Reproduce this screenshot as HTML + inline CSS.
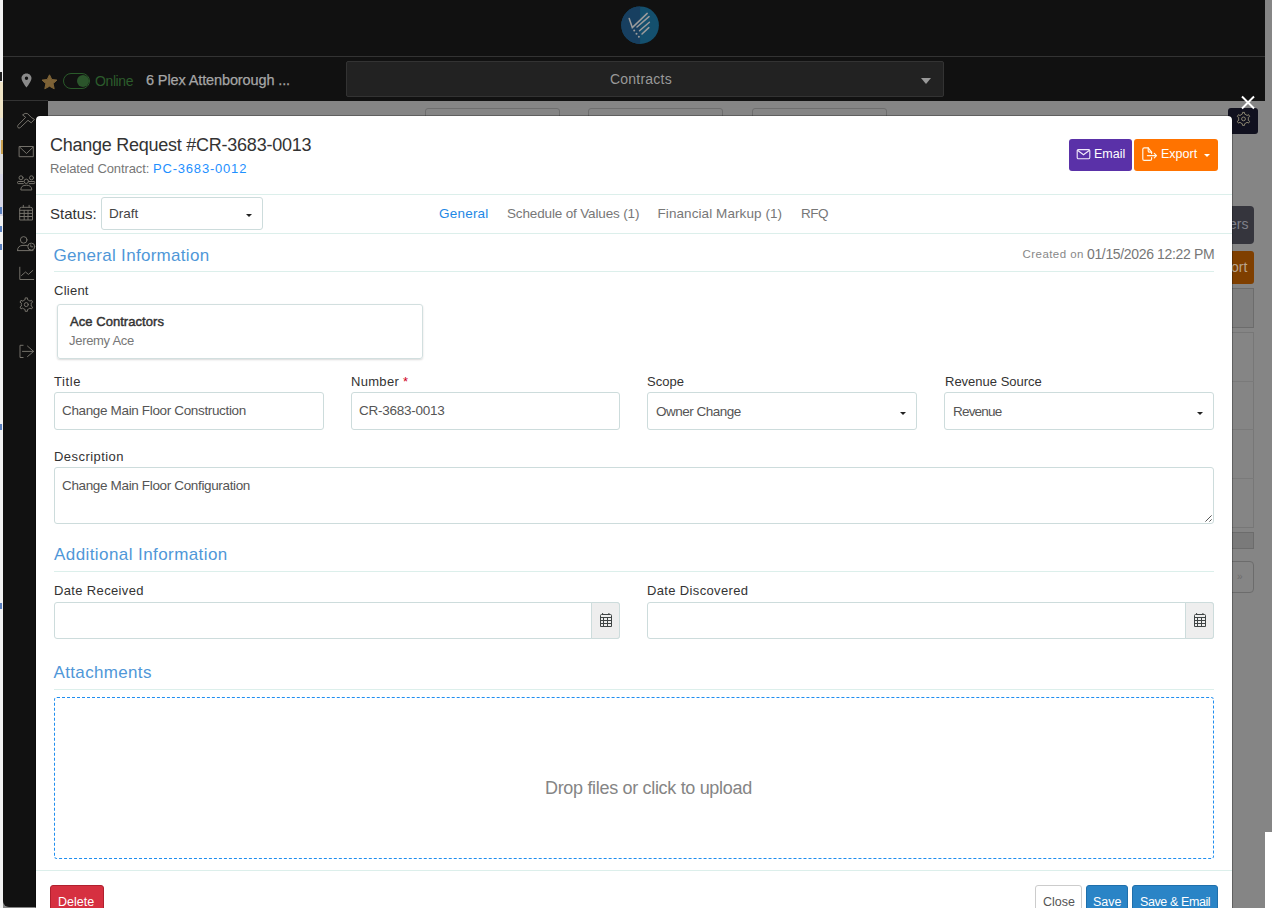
<!DOCTYPE html>
<html><head><meta charset="utf-8">
<style>
*{box-sizing:border-box;margin:0;padding:0}
html,body{width:1272px;height:908px;overflow:hidden}
body{position:relative;background:#858585;font-family:"Liberation Sans",sans-serif;color:#333}
.a{position:absolute}
.t{position:absolute;white-space:nowrap;line-height:1}
.ln{position:absolute;height:1px;background:#dcefeb}
.inp{position:absolute;border:1px solid #cddcdc;border-radius:3px;background:#fff}
.lbl{font-size:13px;color:#333}
.val{font-size:13.5px;color:#555}
.sec{font-size:17px;color:#4f97d8}
.caret{position:absolute;width:0;height:0;border-left:3px solid transparent;border-right:3px solid transparent;border-top:3px solid #222}
.btn{position:absolute;border-radius:3px}
</style></head>
<body>
<!-- left outer strip -->
<div class="a" style="left:0;top:0;width:3px;height:908px;background:#f2f2f2"></div>
<div class="a" style="left:0;top:72px;width:2px;height:9px;background:#222"></div>
<div class="a" style="left:0;top:82px;width:3px;height:36px;background:#efe4c6"></div>
<div class="a" style="left:0;top:118px;width:3px;height:56px;background:#dedede"></div>
<div class="a" style="left:1px;top:140px;width:2px;height:14px;background:#c9a050"></div>
<div class="a" style="left:0;top:174px;width:3px;height:42px;background:#d6d6e6"></div>
<div class="a" style="left:0;top:207px;width:2px;height:7px;background:#5a80c0"></div>
<div class="a" style="left:0;top:226px;width:2px;height:6px;background:#5a80c0"></div>
<div class="a" style="left:0;top:244px;width:2px;height:6px;background:#5a80c0"></div>
<div class="a" style="left:0;top:424px;width:2px;height:6px;background:#5a80c0"></div>
<div class="a" style="left:0;top:603px;width:2px;height:6px;background:#5a80c0"></div>
<!-- bottom-right white -->
<div class="a" style="left:1265px;top:832px;width:7px;height:76px;background:#fff"></div>

<!-- app dark header -->
<div class="a" style="left:3px;top:0;width:1262px;height:101px;background:#111"></div>
<div class="a" style="left:3px;top:56px;width:1262px;height:1px;background:#333"></div>
<!-- sidebar -->
<div class="a" style="left:3px;top:100px;width:45px;height:807px;background:#111;border-bottom-left-radius:6px"></div>
<div class="a" style="left:3px;top:100px;width:45px;height:1px;background:#333"></div>

<!-- logo -->
<svg class="a" style="left:620px;top:5px" width="40" height="40" viewBox="0 0 40 40">
  <circle cx="20.1" cy="20.2" r="18.8" fill="#14506e"/>
  <path d="M20.1 1.4 A18.8 18.8 0 0 0 20.1 39 Z" fill="#173f60"/>
  <g stroke="#9c9c9c" stroke-width="1.5" stroke-linecap="round" fill="none">
    <path d="M9.2 13.4 L12.3 22.6 L27.2 8.4"/>
    <path d="M17 22 L29 11.6"/>
    <path d="M19.5 25.8 L29.4 17.2"/>
    <path d="M22 29 L28.8 22.6"/>
  </g>
  <g fill="#9c9c9c"><circle cx="14.2" cy="25.6" r="1"/><circle cx="16.5" cy="28.7" r="1"/><circle cx="18.9" cy="31.7" r="1"/></g>
</svg>

<!-- header row 2 -->
<svg class="a" style="left:21px;top:73px" width="11" height="15" viewBox="0 0 11 15">
  <path d="M5.5 0.5 C2.5 0.5 0.5 2.7 0.5 5.3 C0.5 8.5 5.5 14.5 5.5 14.5 C5.5 14.5 10.5 8.5 10.5 5.3 C10.5 2.7 8.5 0.5 5.5 0.5 Z M5.5 3.6 A1.7 1.7 0 1 1 5.5 7 A1.7 1.7 0 1 1 5.5 3.6 Z" fill="#8a8a8a" fill-rule="evenodd"/>
</svg>
<svg class="a" style="left:41px;top:74px" width="17" height="16" viewBox="0 0 17 16">
  <path d="M8.5 0.8 L10.8 5.5 L16 6.1 L12.1 9.6 L13.2 14.8 L8.5 12.2 L3.8 14.8 L4.9 9.6 L1 6.1 L6.2 5.5 Z" fill="#7d6236" stroke="#7d6236" stroke-width="1" stroke-linejoin="round"/>
</svg>
<div class="a" style="left:63px;top:73px;width:27px;height:16px;border:1px solid #2a5a2a;border-radius:8px"></div>
<div class="a" style="left:77px;top:75px;width:12px;height:12px;border-radius:50%;background:#2b552b"></div>
<div class="t" style="left:95px;top:74px;font-size:14px;color:#2c5c2c;letter-spacing:-0.4px">Online</div>
<div class="t" style="left:146px;top:72.6px;font-size:14.5px;font-weight:400;color:#a6a6a6;letter-spacing:-0.12px;-webkit-text-stroke:0.25px #a6a6a6">6 Plex Attenborough ...</div>

<div class="a" style="left:346px;top:61px;width:598px;height:36px;background:#222;border:1px solid #333;border-radius:2px"></div>
<div class="t" style="left:610px;top:72px;font-size:14px;color:#999;letter-spacing:0.22px">Contracts</div>
<div class="a" style="left:921px;top:78px;width:0;height:0;border-left:5px solid transparent;border-right:5px solid transparent;border-top:6px solid #999"></div>

<!-- background page bits under overlay -->
<div class="a" style="left:425px;top:108px;width:135px;height:12px;border:1px solid #6e6e6e;border-radius:3px"></div>
<div class="a" style="left:588px;top:108px;width:135px;height:12px;border:1px solid #6e6e6e;border-radius:3px"></div>
<div class="a" style="left:752px;top:108px;width:135px;height:12px;border:1px solid #6e6e6e;border-radius:3px"></div>

<!-- right side bits -->
<div class="a" style="left:1228px;top:108px;width:30px;height:26px;background:#11111f;border-radius:3px"></div>
<svg class="a" style="left:1236px;top:111px" width="16" height="16" viewBox="0 0 16 16" fill="none" stroke="#8a8470" stroke-width="1" stroke-linejoin="round">
  <path d="M5.1 3.7 L6.3 3.1 L6.5 1.4 L8.5 1.4 L8.7 3.1 L10.0 3.7 L11.0 4.5 L12.6 3.7 L13.7 5.5 L12.2 6.5 L12.4 7.9 L12.2 9.3 L13.7 10.3 L12.6 12.1 L11.0 11.3 L9.9 12.1 L8.7 12.7 L8.5 14.4 L6.5 14.4 L6.3 12.7 L5.0 12.1 L4.0 11.3 L2.4 12.1 L1.3 10.3 L2.8 9.3 L2.6 7.9 L2.8 6.5 L1.3 5.5 L2.4 3.7 L4.0 4.5 Z"/>
  <circle cx="7.5" cy="7.9" r="1.9"/>
</svg>
<svg class="a" style="left:1240px;top:95px" width="16" height="15" viewBox="0 0 16 15">
  <path d="M2 1.5 L14 13.5 M14 1.5 L2 13.5" stroke="#fff" stroke-width="2"/>
</svg>
<div class="a" style="left:1200px;top:206px;width:54px;height:38px;background:#35353d;border-radius:4px"></div>
<div class="t" style="left:1229px;top:217px;font-size:14px;color:#80808a">ers</div>
<div class="a" style="left:1200px;top:251px;width:54px;height:33px;background:#7f3f00;border-radius:3px"></div>
<div class="t" style="left:1231px;top:260px;font-size:14px;color:#b8a48e">ort</div>
<div class="a" style="left:1200px;top:288px;width:54px;height:40px;background:#7e7e7e;border:1px solid #6c6c6c"></div>
<div class="a" style="left:1200px;top:332px;width:54px;height:196px;border:1px solid #777"></div>
<div class="a" style="left:1200px;top:381px;width:54px;height:1px;background:#7a7a7a"></div>
<div class="a" style="left:1200px;top:429px;width:54px;height:1px;background:#7a7a7a"></div>
<div class="a" style="left:1200px;top:478px;width:54px;height:1px;background:#7a7a7a"></div>
<div class="a" style="left:1200px;top:532px;width:54px;height:17px;background:#7a7a7a;border:1px solid #6c6c6c"></div>
<div class="a" style="left:1200px;top:561px;width:54px;height:32px;border:1px solid #6c6c6c;border-radius:4px"></div>
<div class="t" style="left:1237px;top:572px;font-size:10px;color:#6c6c6c">»</div>

<!-- sidebar icons -->
<svg class="a" style="left:14px;top:108px" width="22" height="260" viewBox="0 0 22 260" fill="none" stroke="#74716a" stroke-width="1" stroke-linejoin="round" stroke-linecap="round">
  <path d="M8.9 6.7 L11.1 5.4 L13.7 5.7 L17.2 9.4 L20.4 11.4 L17.2 14.8 L14 12.3 L6.3 19.6 Q5 20.6 4 19.6 Q3.2 18.6 4 17.2 L11.4 9.6 Z"/>
  <rect x="5.5" y="38.5" width="13.8" height="10.2"/>
  <path d="M5.8 39.2 L12.5 45.5 L19 39.2"/>
  <circle cx="7" cy="69.8" r="2"/><circle cx="17.5" cy="69.8" r="2"/><circle cx="12.3" cy="73.3" r="2.2"/>
  <path d="M9.3 73.5 H4.2 Q3.5 73.5 3.5 74.5 Q3.5 75.6 4.2 75.6 H9.3"/>
  <path d="M15.3 73.5 H20.2 Q20.9 73.5 20.9 74.5 Q20.9 75.6 20.2 75.6 H15.3"/>
  <path d="M6.8 81.6 Q6.8 77.2 12.3 77.2 Q17.8 77.2 17.8 81.6 Z"/>
  <path d="M5.7 111.6 V101 Q5.7 99.3 7.4 99.3 H16.8 Q18.5 99.3 18.5 101 V111.6 Z"/>
  <path d="M5.7 102.3 H18.5 M5.7 105.4 H18.5 M5.7 108.5 H18.5 M10.2 102.3 V111.6 M14 102.3 V111.6 M9.3 97.3 V99.3 M15.1 97.3 V99.3"/>
  <circle cx="9.7" cy="131.9" r="3.3"/>
  <path d="M3.5 142.6 Q3.5 137.4 9 137.4 H13.5 M3.5 142.6 H19"/>
  <circle cx="17.3" cy="138.6" r="3.5"/>
  <path d="M16.8 136.8 V138.8 H18.8"/>
  <path d="M5.8 159.2 V171.5 H19.7"/>
  <path d="M7.5 167.5 L11.5 164 L14.4 166.4 L18.8 162.5"/>
  <path d="M9.8 192.3 L11.1 191.7 L11.2 189.9 L13.4 189.9 L13.5 191.7 L14.8 192.3 L15.9 193.1 L17.6 192.3 L18.6 194.2 L17.1 195.2 L17.3 196.6 L17.1 198.0 L18.6 199.0 L17.6 200.9 L15.9 200.1 L14.8 200.9 L13.5 201.5 L13.4 203.3 L11.2 203.3 L11.1 201.5 L9.8 200.9 L8.7 200.1 L7.0 200.9 L6.0 199.0 L7.5 198.0 L7.3 196.6 L7.5 195.2 L6.0 194.2 L7.0 192.3 L8.7 193.1 Z"/>
  <circle cx="12.3" cy="196.6" r="2"/>
  <path d="M9.1 237.3 H6 V249.5 H9.1 M8.5 243.4 H19.6 M13.5 238.1 L19.6 243.4 L13.5 248.6"/>
</svg>

<!-- ===== MODAL ===== -->
<div class="a" style="left:35px;top:115px;width:1198px;height:800px;background:#fff;background-clip:padding-box;border:1px solid rgba(0,0,0,.28);border-radius:5px"></div>

<div class="t" style="left:50px;top:135.7px;font-size:18px;color:#333;letter-spacing:-0.25px">Change Request #CR-3683-0013</div>
<div class="t" style="left:50px;top:162px;font-size:13px;color:#777;letter-spacing:-0.12px">Related Contract:</div>
<div class="t" style="left:153px;top:162px;font-size:13px;color:#1e90ff;letter-spacing:0.8px">PC-3683-0012</div>

<div class="btn" style="left:1069px;top:139px;width:63px;height:32px;background:#5a31a8"></div>
<svg class="a" style="left:1076px;top:148px" width="15" height="12" viewBox="0 0 15 12" fill="none" stroke="#f2ecfa" stroke-width="1.1">
  <rect x="1.2" y="1.6" width="12.6" height="9.2" rx="1.2"/><path d="M1.5 2.3 L7.5 6.8 L13.5 2.3"/>
</svg>
<div class="t" style="left:1094px;top:148.2px;font-size:12.5px;color:#fff">Email</div>
<div class="btn" style="left:1134px;top:139px;width:84px;height:32px;background:#ff7300"></div>
<svg class="a" style="left:1141px;top:146px" width="17" height="16" viewBox="0 0 17 16" fill="none" stroke="#fff6e6" stroke-width="1.2" stroke-linecap="round" stroke-linejoin="round">
  <path d="M10.6 7.6 V6.2 L7.2 1.8 H3.3 Q1.8 1.8 1.8 3.3 V12.9 Q1.8 14.4 3.3 14.4 H9.1 Q10.6 14.4 10.6 12.9 V11.6"/>
  <path d="M7.2 1.8 V4.8 Q7.2 6.2 8.6 6.2 H10.6"/>
  <path d="M6.4 9.6 H15.4 M13.3 7.4 L15.5 9.6 L13.3 11.9"/>
</svg>
<div class="t" style="left:1161px;top:148.2px;font-size:12.5px;color:#fff">Export</div>
<div class="a" style="left:1204px;top:154px;width:0;height:0;border-left:3px solid transparent;border-right:3px solid transparent;border-top:3px solid #fff"></div>

<div class="ln" style="left:36px;top:194px;width:1196px"></div>
<div class="t" style="left:50px;top:206.1px;font-size:15px;color:#333">Status:</div>
<div class="inp" style="left:101px;top:197px;width:162px;height:33px"></div>
<div class="t val" style="left:109px;top:206.6px;color:#444">Draft</div>
<div class="caret" style="left:246px;top:214px"></div>
<div class="t" style="left:439px;top:207.3px;font-size:13.5px;color:#1e88e5;letter-spacing:0.22px">General</div>
<div class="t" style="left:507px;top:207.3px;font-size:13.5px;color:#777;letter-spacing:-0.15px">Schedule of Values (1)</div>
<div class="t" style="left:657.5px;top:207.3px;font-size:13.5px;color:#777;letter-spacing:0.08px">Financial Markup (1)</div>
<div class="t" style="left:801px;top:207.3px;font-size:13.5px;color:#777;letter-spacing:-0.5px">RFQ</div>
<div class="ln" style="left:36px;top:233px;width:1196px"></div>

<!-- General information -->
<div class="t sec" style="left:53.5px;top:246.6px;letter-spacing:0.3px">General Information</div>
<div class="t" style="left:1022.5px;top:248.8px;font-size:11.5px;color:#888;letter-spacing:0.45px">Created on</div>
<div class="t" style="left:1087px;top:246.7px;font-size:14px;color:#777;letter-spacing:-0.35px">01/15/2026 12:22 PM</div>
<div class="ln" style="left:54px;top:271px;width:1160px"></div>
<div class="t lbl" style="left:54px;top:283.7px;letter-spacing:0.25px">Client</div>
<div class="a" style="left:57px;top:304px;width:366px;height:55px;border:1px solid #d2dfdf;border-radius:3px;box-shadow:0 1px 2px rgba(0,0,0,.15)"></div>
<div class="t" style="left:70px;top:314.8px;font-size:13px;font-weight:400;color:#333;letter-spacing:0.05px;-webkit-text-stroke:0.45px #333">Ace Contractors</div>
<div class="t" style="left:69px;top:333.8px;font-size:13px;color:#777;letter-spacing:-0.3px">Jeremy Ace</div>

<div class="t lbl" style="left:54px;top:374.8px;letter-spacing:0.6px">Title</div>
<div class="inp" style="left:54px;top:392px;width:270px;height:38px"></div>
<div class="t val" style="left:62px;top:403.6px;letter-spacing:-0.35px">Change Main Floor Construction</div>

<div class="t lbl" style="left:351px;top:374.8px;letter-spacing:0.3px">Number <span style="color:#d0021b">*</span></div>
<div class="inp" style="left:351px;top:392px;width:269px;height:38px"></div>
<div class="t val" style="left:359px;top:403.6px;letter-spacing:-0.25px">CR-3683-0013</div>

<div class="t lbl" style="left:647px;top:374.8px">Scope</div>
<div class="inp" style="left:647px;top:392px;width:270px;height:38px"></div>
<div class="t val" style="left:656px;top:404.6px;letter-spacing:-0.5px">Owner Change</div>
<div class="caret" style="left:900px;top:412px"></div>

<div class="t lbl" style="left:945px;top:374.8px">Revenue Source</div>
<div class="inp" style="left:944px;top:392px;width:270px;height:38px"></div>
<div class="t val" style="left:953px;top:404.6px;letter-spacing:-0.8px">Revenue</div>
<div class="caret" style="left:1197px;top:412px"></div>

<div class="t lbl" style="left:54px;top:450px;letter-spacing:0.45px">Description</div>
<div class="inp" style="left:54px;top:467px;width:1160px;height:57px"></div>
<div class="t val" style="left:62px;top:478.6px;letter-spacing:-0.35px">Change Main Floor Configuration</div>
<svg class="a" style="left:1204px;top:514px" width="9" height="9" viewBox="0 0 9 9" stroke="#555" stroke-width="1"><path d="M7.6 1.4 L1.4 7.6 M7.6 5.4 L5.4 7.6"/></svg>

<!-- Additional information -->
<div class="t sec" style="left:54px;top:545.9px;letter-spacing:0.42px">Additional Information</div>
<div class="ln" style="left:54px;top:571px;width:1160px"></div>
<div class="t lbl" style="left:54px;top:583.7px;letter-spacing:0.35px">Date Received</div>
<div class="inp" style="left:54px;top:602px;width:566px;height:37px"></div>
<div class="a" style="left:591px;top:602px;width:29px;height:37px;background:#eee;border:1px solid #cddcdc;border-radius:0 3px 3px 0"></div>
<svg class="a" style="left:599px;top:612px" width="14" height="16" viewBox="0 0 14 16" fill="none" stroke="#3f4444" stroke-width="1">
  <path d="M1.5 14.5 V3.5 Q1.5 2.5 2.5 2.5 H11.5 Q12.5 2.5 12.5 3.5 V14.5 Z"/>
  <path d="M1.5 5.5 H12.5 M1.5 8.5 H12.5 M1.5 11.5 H12.5 M4.5 5.5 V14.5 M8.5 5.5 V14.5 M3.6 1 V2.5 M9.9 1 V2.5"/>
</svg>
<div class="t lbl" style="left:647px;top:583.7px;letter-spacing:0.35px">Date Discovered</div>
<div class="inp" style="left:647px;top:602px;width:567px;height:37px"></div>
<div class="a" style="left:1185px;top:602px;width:29px;height:37px;background:#eee;border:1px solid #cddcdc;border-radius:0 3px 3px 0"></div>

<svg class="a" style="left:1193px;top:612px" width="14" height="16" viewBox="0 0 14 16" fill="none" stroke="#3f4444" stroke-width="1">
  <path d="M1.5 14.5 V3.5 Q1.5 2.5 2.5 2.5 H11.5 Q12.5 2.5 12.5 3.5 V14.5 Z"/>
  <path d="M1.5 5.5 H12.5 M1.5 8.5 H12.5 M1.5 11.5 H12.5 M4.5 5.5 V14.5 M8.5 5.5 V14.5 M3.6 1 V2.5 M9.9 1 V2.5"/>
</svg>
<!-- Attachments -->
<div class="t sec" style="left:53.6px;top:663.8px;letter-spacing:0.33px">Attachments</div>
<div class="ln" style="left:54px;top:689px;width:1160px"></div>
<div class="a" style="left:54px;top:697px;width:1160px;height:162px;border:1px dashed #1f8ef0;border-radius:3px"></div>
<div class="t" style="left:545px;top:778.5px;font-size:18px;color:#858585;letter-spacing:-0.32px">Drop files or click to upload</div>

<div class="ln" style="left:36px;top:870px;width:1196px"></div>
<div class="btn" style="left:50px;top:885px;width:54px;height:30px;background:#d63040;border:1px solid #b0202e"></div>
<div class="t" style="left:58px;top:896.4px;font-size:12.5px;color:#fff">Delete</div>
<div class="btn" style="left:1035px;top:885px;width:47px;height:30px;background:#fff;border:1px solid #ccc"></div>
<div class="t" style="left:1043px;top:896.4px;font-size:12.5px;color:#555">Close</div>
<div class="btn" style="left:1086px;top:885px;width:42px;height:30px;background:#2a84c6;border:1px solid #1f6fab"></div>
<div class="t" style="left:1093px;top:896.4px;font-size:12.5px;color:#fff">Save</div>
<div class="btn" style="left:1132px;top:885px;width:86px;height:30px;background:#2a84c6;border:1px solid #1f6fab"></div>
<div class="t" style="left:1140px;top:896.4px;font-size:12.5px;color:#fff;letter-spacing:-0.4px">Save &amp; Email</div>

</body></html>
